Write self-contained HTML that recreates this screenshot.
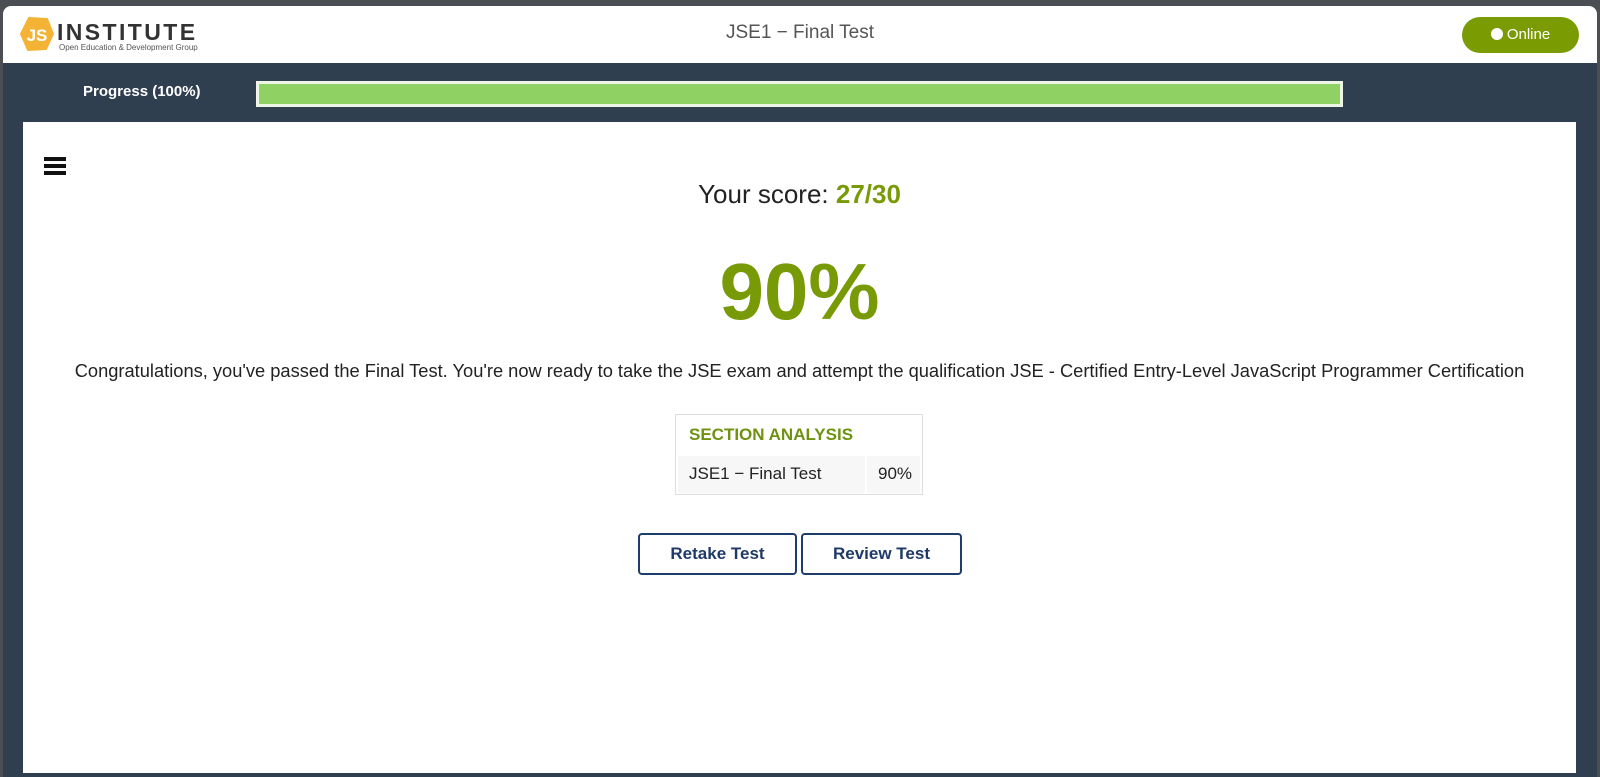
<!DOCTYPE html>
<html><head><meta charset="utf-8"><style>
*{margin:0;padding:0;box-sizing:border-box}
body{width:1600px;height:777px;background:#4b4e53;position:relative;overflow:hidden;font-family:"Liberation Sans",sans-serif}
.win{position:absolute;left:3px;top:6px;width:1594px;height:771px;background:#2f3f50;border-radius:8px 8px 0 0;overflow:hidden}
.hdr{position:absolute;left:0;top:0;width:1594px;height:57px;background:#fff}
.title{position:absolute;left:0;width:1594px;top:16px;text-align:center;font-size:19px;color:#555}
.pill{position:absolute;left:1459px;top:11px;width:117px;height:36px;border-radius:18px;background:#7a9b02;color:#fff;font-size:15px;line-height:36px;text-align:center}
.pill i{display:inline-block;width:12px;height:12px;border-radius:6px;background:#fff;vertical-align:-1px;margin-right:4px}
.prog{position:absolute;left:80px;top:77px;color:#fff;font-weight:bold;font-size:15px}
.bar{position:absolute;left:253px;top:75px;width:1087px;height:26px;border:3px solid #eef5e6;background:#8fd163}
.panel{position:absolute;left:20px;top:116px;width:1553px;height:651px;background:#fff}
.ham{position:absolute;left:21px;top:35px;width:22px}
.ham b{display:block;height:4px;background:#111;margin-bottom:3px}
.c{position:absolute;left:0;width:1553px;text-align:center}
.t{position:absolute;border:1px solid #ddd;left:652px;top:292px;width:248px;height:81px}
.btn{position:absolute;top:411px;height:42px;border:2px solid #1f3d6c;border-radius:4px;color:#1f3a66;font-weight:bold;font-size:17px;text-align:center;line-height:38px}
</style></head><body>
<div class="win">
<div class="hdr">
 <svg style="position:absolute;left:17px;top:11px" width="34" height="34" viewBox="0 0 34 34"><polygon points="9,1 27,2 33,17 26,32 8,33 1,17" fill="#f5b335" stroke="#f5b335" stroke-width="2" stroke-linejoin="round"/><text x="17" y="24" text-anchor="middle" font-family="Liberation Sans" font-weight="bold" font-size="17" fill="#fff">JS</text></svg>
 <div style="position:absolute;left:54px;top:13px;font-size:23px;font-weight:900;color:#333;letter-spacing:2.4px">INSTITUTE</div>
 <div style="position:absolute;left:56px;top:37px;font-size:8px;color:#555">Open Education &amp; Development Group</div>
 <div class="title">JSE1 − Final Test</div>
 <div class="pill"><i></i>Online</div>
</div>
<div class="prog">Progress (100%)</div>
<div class="bar"></div>
<div class="panel">
 <div class="ham"><b></b><b></b><b></b></div>
 <div class="c" style="top:57px;font-size:26px;color:#222">Your score: <b style="color:#779a06">27/30</b></div>
 <div class="c" style="top:124px;font-size:80px;font-weight:bold;color:#779a06">90%</div>
 <div class="c" style="top:238px;font-size:18.3px;color:#222">Congratulations, you've passed the Final Test. You're now ready to take the JSE exam and attempt the qualification JSE - Certified Entry-Level JavaScript Programmer Certification</div>
 <div class="t">
  <div style="position:absolute;left:13px;top:10px;font-size:17px;font-weight:bold;color:#6f9210">SECTION ANALYSIS</div>
  <div style="position:absolute;left:2px;top:41px;width:242px;height:37px;background:#f7f7f7"></div>
  <div style="position:absolute;left:189px;top:41px;width:2px;height:37px;background:#fff"></div>
  <div style="position:absolute;left:13px;top:49px;font-size:17px;color:#222">JSE1 − Final Test</div>
  <div style="position:absolute;left:202px;top:49px;font-size:17px;color:#222">90%</div>
 </div>
 <div class="btn" style="left:615px;width:159px">Retake Test</div>
 <div class="btn" style="left:778px;width:161px">Review Test</div>
</div>
</div>
</body></html>
